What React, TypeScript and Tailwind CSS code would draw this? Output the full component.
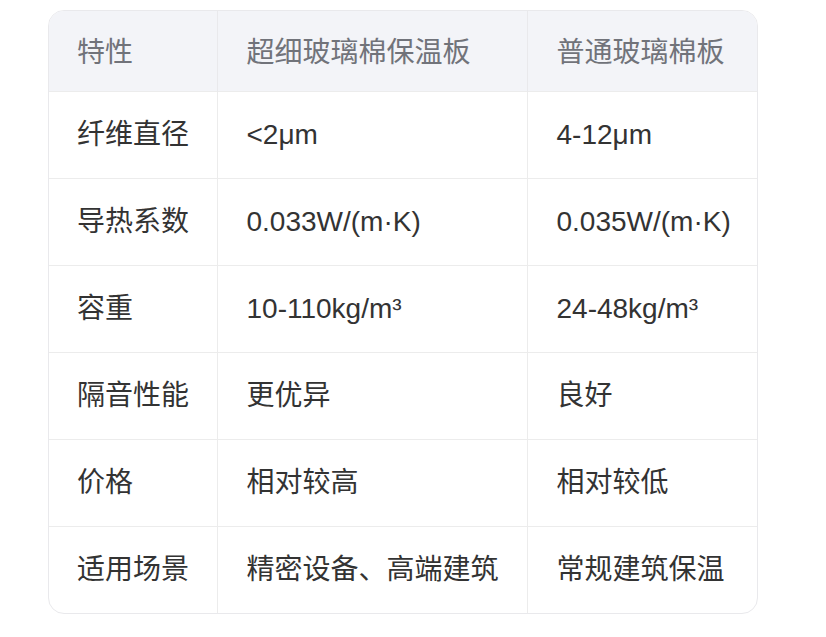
const rows: [string, string, string][] = [
  ["纤维直径", "<2μm", "4-12μm"],
  ["导热系数", "0.033W/(m·K)", "0.035W/(m·K)"],
  ["容重", "10-110kg/m³", "24-48kg/m³"],
  ["隔音性能", "更优异", "良好"],
  ["价格", "相对较高", "相对较低"],
  ["适用场景", "精密设备、高端建筑", "常规建筑保温"],
];

export default function App() {
  return (
    <div
      className="min-h-screen bg-white pt-[10px] pl-[48px]"
      style={{ fontFamily: '"Liberation Sans", "Noto Sans CJK SC", sans-serif' }}
    >
      <div className="w-[710px] rounded-[16px] border border-[#e9e9ec] overflow-hidden">
        <table className="w-full border-collapse table-fixed text-[28px]">
          <colgroup>
            <col className="w-[168px]" />
            <col className="w-[310px]" />
            <col />
          </colgroup>
          <thead>
            <tr className="h-[80px] bg-[#f3f4f8] text-[#71737a]">
              <th className="px-[28px] pt-[4px] text-left font-normal">特性</th>
              <th className="px-[29px] pt-[4px] text-left font-normal border-l border-[#e9e9ec]">超细玻璃棉保温板</th>
              <th className="px-[29px] pt-[4px] text-left font-normal border-l border-[#e9e9ec]">普通玻璃棉板</th>
            </tr>
          </thead>
          <tbody className="text-[#333333]">
            {rows.map((r) => (
              <tr key={r[0]} className="h-[87px] border-t border-[#ececec]">
                <td className="px-[28px] whitespace-nowrap">{r[0]}</td>
                <td className="px-[29px] whitespace-nowrap border-l border-[#ececec]">{r[1]}</td>
                <td className="px-[29px] whitespace-nowrap border-l border-[#ececec]">{r[2]}</td>
              </tr>
            ))}
          </tbody>
        </table>
      </div>
    </div>
  );
}
